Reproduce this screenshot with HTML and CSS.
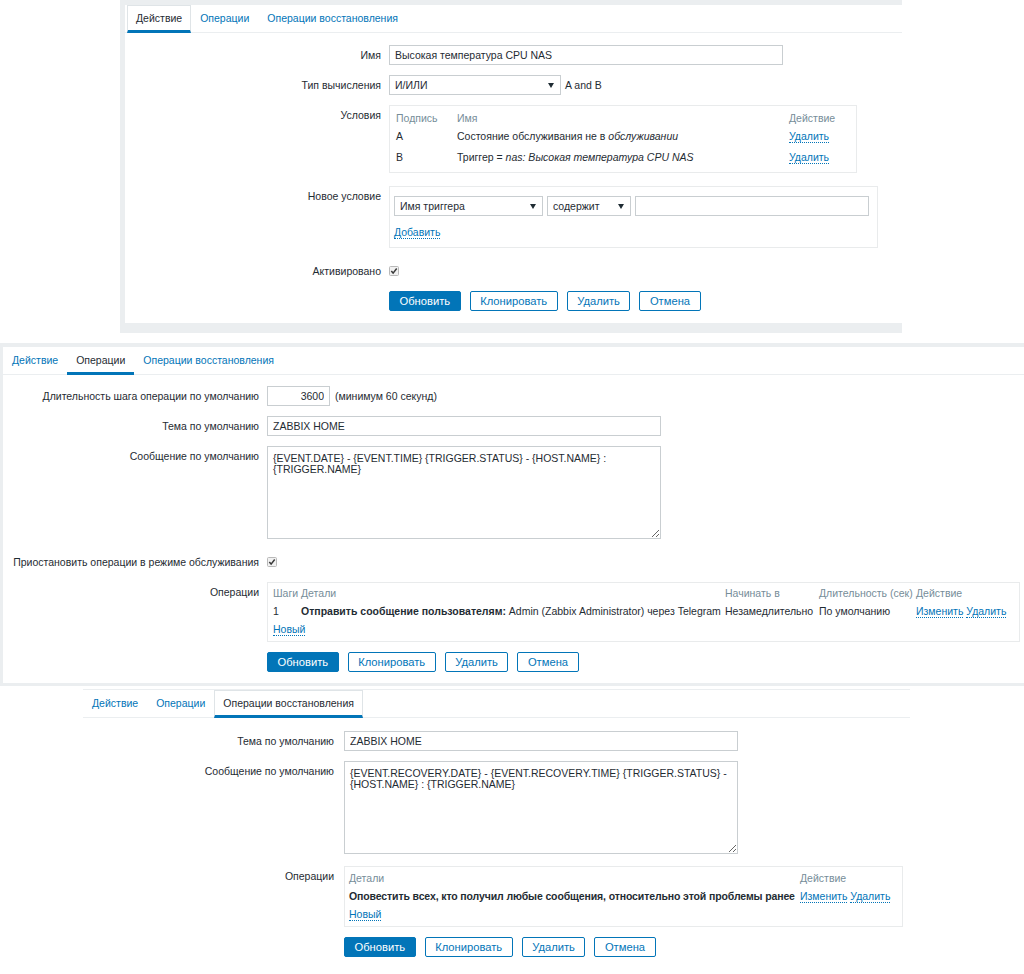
FILE: index.html
```html
<!DOCTYPE html>
<html lang="ru">
<head>
    <meta charset="UTF-8">
    <meta name="viewport" content="width=device-width, initial-scale=1.0">
    <title>Настройка действия</title>
    <link rel="stylesheet" href="styles.css">
</head>
<body>
    <!-- Вкладка "Действие" -->
    <div class="panel panel-action">
        <ul class="tabs">
            <li class="active boxed">Действие</li>
            <li>Операции</li>
            <li>Операции восстановления</li>
        </ul>
        <div class="form">
            <div class="row">
                <div class="label">Имя</div>
                <div class="field"><input class="input" type="text" value="Высокая температура CPU NAS" readonly></div>
            </div>
            <div class="row">
                <div class="label">Тип вычисления</div>
                <div class="field">
                    <div class="select select-calc">И/ИЛИ</div>
                    <span class="hint">A and B</span>
                </div>
            </div>
            <div class="row">
                <div class="label">Условия</div>
                <div class="field">
                    <div class="box box-conditions">
                        <div class="list list-conditions">
                            <div class="th">Подпись</div>
                            <div class="th">Имя</div>
                            <div class="th">Действие</div>
                            <div>A</div>
                            <div>Состояние обслуживания не в <i>обслуживании</i></div>
                            <div><a class="link">Удалить</a></div>
                            <div>B</div>
                            <div>Триггер = <i>nas: Высокая температура CPU NAS</i></div>
                            <div><a class="link">Удалить</a></div>
                        </div>
                    </div>
                </div>
            </div>
            <div class="row spaced">
                <div class="label">Новое условие</div>
                <div class="field">
                    <div class="box box-new">
                        <div class="new-controls">
                            <div class="select select-type">Имя триггера</div>
                            <div class="select select-op">содержит</div>
                            <input class="input input-value" type="text" value="" readonly>
                        </div>
                        <div class="add-link"><a class="link">Добавить</a></div>
                    </div>
                </div>
            </div>
            <div class="row spaced">
                <div class="label">Активировано</div>
                <div class="field field-check">
                    <svg class="checkbox" width="10" height="10" viewBox="0 0 10 10"><rect x="0.5" y="0.5" width="9" height="9" rx="1" fill="#f1f1f1" stroke="#b9b9b9"/><path d="M2.3 5.1 L4.1 7.1 L7.7 2.5" fill="none" stroke="#3a3a3a" stroke-width="1.5"/></svg>
                </div>
            </div>
            <div class="row">
                <div class="label"></div>
                <div class="field buttons">
                    <button class="btn btn-primary">Обновить</button>
                    <button class="btn">Клонировать</button>
                    <button class="btn">Удалить</button>
                    <button class="btn">Отмена</button>
                </div>
            </div>
        </div>
    </div>

    <!-- Вкладка "Операции" -->
    <div class="panel panel-operations">
        <ul class="tabs">
            <li>Действие</li>
            <li class="active">Операции</li>
            <li>Операции восстановления</li>
        </ul>
        <div class="form">
            <div class="row">
                <div class="label">Длительность шага операции по умолчанию</div>
                <div class="field">
                    <input class="input input-short" type="text" value="3600" readonly>
                    <span class="hint hint-wide">(минимум 60 секунд)</span>
                </div>
            </div>
            <div class="row">
                <div class="label">Тема по умолчанию</div>
                <div class="field"><input class="input" type="text" value="ZABBIX HOME" readonly></div>
            </div>
            <div class="row">
                <div class="label">Сообщение по умолчанию</div>
                <div class="field"><textarea class="textarea" readonly>{EVENT.DATE} - {EVENT.TIME} {TRIGGER.STATUS} - {HOST.NAME} :
{TRIGGER.NAME}</textarea></div>
            </div>
            <div class="row spaced">
                <div class="label">Приостановить операции в режиме обслуживания</div>
                <div class="field field-check">
                    <svg class="checkbox" width="10" height="10" viewBox="0 0 10 10"><rect x="0.5" y="0.5" width="9" height="9" rx="1" fill="#f1f1f1" stroke="#b9b9b9"/><path d="M2.3 5.1 L4.1 7.1 L7.7 2.5" fill="none" stroke="#3a3a3a" stroke-width="1.5"/></svg>
                </div>
            </div>
            <div class="row">
                <div class="label">Операции</div>
                <div class="field">
                    <div class="box box-ops">
                        <div class="list list-ops">
                            <div class="th">Шаги</div>
                            <div class="th">Детали</div>
                            <div class="th">Начинать в</div>
                            <div class="th">Длительность (сек)</div>
                            <div class="th">Действие</div>
                            <div>1</div>
                            <div><b>Отправить сообщение пользователям:</b> Admin (Zabbix Administrator) через Telegram</div>
                            <div>Незамедлительно</div>
                            <div>По умолчанию</div>
                            <div><a class="link">Изменить</a> <a class="link">Удалить</a></div>
                            <div class="full"><a class="link">Новый</a></div>
                        </div>
                    </div>
                </div>
            </div>
            <div class="row">
                <div class="label"></div>
                <div class="field buttons">
                    <button class="btn btn-primary">Обновить</button>
                    <button class="btn">Клонировать</button>
                    <button class="btn">Удалить</button>
                    <button class="btn">Отмена</button>
                </div>
            </div>
        </div>
    </div>

    <!-- Вкладка "Операции восстановления" -->
    <div class="panel panel-recovery">
        <ul class="tabs">
            <li>Действие</li>
            <li>Операции</li>
            <li class="active boxed">Операции восстановления</li>
        </ul>
        <div class="form">
            <div class="row">
                <div class="label">Тема по умолчанию</div>
                <div class="field"><input class="input" type="text" value="ZABBIX HOME" readonly></div>
            </div>
            <div class="row">
                <div class="label">Сообщение по умолчанию</div>
                <div class="field"><textarea class="textarea" readonly>{EVENT.RECOVERY.DATE} - {EVENT.RECOVERY.TIME} {TRIGGER.STATUS} -
{HOST.NAME} : {TRIGGER.NAME}</textarea></div>
            </div>
            <div class="row spaced">
                <div class="label">Операции</div>
                <div class="field">
                    <div class="box box-recovery">
                        <div class="list list-recovery">
                            <div class="th">Детали</div>
                            <div class="th">Действие</div>
                            <div><b>Оповестить всех, кто получил любые сообщения, относительно этой проблемы ранее</b></div>
                            <div><a class="link">Изменить</a> <a class="link">Удалить</a></div>
                            <div class="full"><a class="link">Новый</a></div>
                        </div>
                    </div>
                </div>
            </div>
            <div class="row">
                <div class="label"></div>
                <div class="field buttons">
                    <button class="btn btn-primary">Обновить</button>
                    <button class="btn">Клонировать</button>
                    <button class="btn">Удалить</button>
                    <button class="btn">Отмена</button>
                </div>
            </div>
        </div>
    </div>
</body>
</html>
```

FILE: styles.css
```css
body {
    margin: 0;
    background-color: #fff;
    color: #1f2c33;
    font-family: 'Liberation Sans', Arial, sans-serif;
    font-size: 10.5px;
}
.panel {
    background-color: #fff;
    --label-width: 256px;
    --label-gap: 8px;
}
.panel-action {
    width: 777px;
    margin-left: 120px;
    border-top: 5px solid #ebeef0;
    border-left: 5px solid #ebeef0;
    border-bottom: 10px solid #ebeef0;
}
.panel-operations {
    margin-top: 10px;
    border-top: 4px solid #ebeef0;
    border-left: 3px solid #ebeef0;
    border-bottom: 3px solid #ebeef0;
}
.panel-operations .form {
    padding: 11px 0 11px;
}
.panel-recovery {
    width: 827px;
    margin: 3px 0 0 83px;
    border-top: 1px solid #ebeef0;
    --label-width: 251px;
    --label-gap: 10px;
}
.panel-recovery .form {
    padding: 13px 0 12px;
}

/* вкладки */
.tabs {
    display: flex;
    margin: 0;
    padding: 0;
    list-style: none;
    border-bottom: 1px solid #ebeef0;
}
.panel-action .tabs {
    padding-left: 2px;
}
.tabs li {
    box-sizing: border-box;
    height: 28px;
    margin-bottom: -1px;
    padding: 0 9px;
    line-height: 24px;
    border-top: 1px solid transparent;
    border-bottom: 3px solid transparent;
    color: #0275b8;
    white-space: nowrap;
}
.tabs li.active {
    color: #1f2c33;
    border-bottom-color: #0275b8;
}
.tabs li.boxed {
    padding: 0 8px;
    border: 1px solid #dfe4e7;
    border-bottom: 3px solid #0275b8;
}

/* форма */
.form {
    padding: 12px 0;
}
.row {
    display: grid;
    grid-template-columns: var(--label-width) 1fr;
    column-gap: var(--label-gap);
    margin-top: 10px;
}
.row:first-child {
    margin-top: 0;
}
.row.spaced {
    margin-top: 13px;
}
.panel-recovery .row.spaced {
    margin-top: 12px;
}
.label {
    line-height: 20px;
    text-align: right;
    white-space: nowrap;
}
.field {
    display: flex;
    align-items: flex-start;
}
.field-check {
    height: 20px;
    align-items: center;
}
.hint {
    margin-left: 4px;
    line-height: 20px;
}
.hint-wide {
    margin-left: 5px;
}
.input {
    box-sizing: border-box;
    width: 394px;
    height: 20px;
    margin: 0;
    padding: 0 5px;
    border: 1px solid #c9ced1;
    background-color: #fff;
    color: #1f2c33;
    font: inherit;
    outline: none;
}
.input-short {
    width: 63px;
    text-align: right;
}
.input-value {
    width: 234px;
}
.textarea {
    box-sizing: border-box;
    width: 394px;
    height: 93px;
    margin: 0;
    padding: 6px 5px;
    border: 1px solid #c9ced1;
    color: #1f2c33;
    font: inherit;
    line-height: 11px;
    outline: none;
    resize: both;
}
.select {
    position: relative;
    box-sizing: border-box;
    height: 20px;
    padding: 0 5px;
    line-height: 18px;
    border: 1px solid #c9ced1;
    background-color: #fff;
    white-space: nowrap;
}
.select::after {
    content: "";
    position: absolute;
    right: 6px;
    top: 7px;
    border-left: 3px solid transparent;
    border-right: 3px solid transparent;
    border-top: 5px solid #1f2c33;
}
.select-calc {
    width: 172px;
}
.select-type {
    width: 149px;
}
.select-op {
    width: 84px;
}
.checkbox {
    display: block;
}

/* блоки со списками */
.box {
    box-sizing: border-box;
    border: 1px solid #e9ebec;
}
.box-conditions {
    width: 468px;
    height: 68px;
    padding: 4px 6px;
}
.box-new {
    width: 489px;
    height: 62px;
    padding: 9px 4px 0;
}
.box-ops {
    width: 753px;
    height: 60px;
    padding: 1px 5px 3px;
}
.box-recovery {
    width: 559px;
    height: 61px;
    padding: 2px 4px 3px;
}
.list {
    display: grid;
    align-items: center;
    white-space: nowrap;
}
.list-conditions {
    grid-template-columns: 61px 332px auto;
    grid-template-rows: 16px 20px 22px;
}
.list-ops {
    grid-template-columns: 28px 424px 94px 97px auto;
    grid-auto-rows: 18px;
}
.list-recovery {
    grid-template-columns: 451px auto;
    grid-auto-rows: 18px;
}
.list-recovery b {
    letter-spacing: -0.12px;
}
.list .full {
    grid-column: 1 / -1;
}
.th {
    color: #768d99;
}
.new-controls {
    display: flex;
    gap: 4px;
}
.add-link {
    margin-top: 8px;
    line-height: 16px;
}
.link {
    color: #0275b8;
    text-decoration: none;
    border-bottom: 1px dotted #0275b8;
}

/* кнопки */
.buttons {
    gap: 9px;
}
.btn {
    box-sizing: border-box;
    height: 20px;
    margin: 0;
    padding: 0 9.5px;
    border: 1px solid #0275b8;
    border-radius: 2px;
    background-color: #fff;
    color: #0275b8;
    font-family: inherit;
    font-size: 11.2px;
    cursor: pointer;
}
.btn-primary {
    background-color: #0275b8;
    color: #fff;
}
```
